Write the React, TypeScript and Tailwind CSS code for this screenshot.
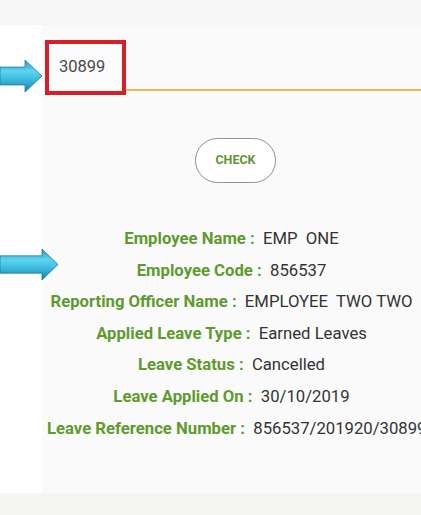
import React from "react";

function Arrow({ w, h, head }: { w: number; h: number; head: number }) {
  const sTop = h * 0.22;
  const sBot = h * 0.78;
  return (
    <svg width={w} height={h} viewBox={`0 0 ${w} ${h}`}>
      <defs>
        <linearGradient id={`g${w}`} x1="0" y1="0" x2="0" y2="1">
          <stop offset="0" stopColor="#2a9cc4" />
          <stop offset="0.35" stopColor="#5fd3f0" />
          <stop offset="0.6" stopColor="#3cbde0" />
          <stop offset="1" stopColor="#1b7ea6" />
        </linearGradient>
      </defs>
      <path
        d={`M0 ${sTop} L${w - head} ${sTop} L${w - head} 0 L${w} ${h / 2} L${w - head} ${h} L${w - head} ${sBot} L0 ${sBot} Z`}
        fill={`url(#g${w})`}
        stroke="#1f7d9f"
        strokeWidth="0.8"
      />
    </svg>
  );
}

const rows: [string, string][] = [
  ["Employee Name", "EMP  ONE"],
  ["Employee Code", "856537"],
  ["Reporting Officer Name", "EMPLOYEE  TWO TWO"],
  ["Applied Leave Type", "Earned Leaves"],
  ["Leave Status", "Cancelled"],
  ["Leave Applied On", "30/10/2019"],
  ["Leave Reference Number", "856537/201920/30899"],
];

export default function App() {
  return (
    <div
      className="relative w-[421px] h-[515px] overflow-hidden bg-[#f6f6f5] flex flex-col"
      style={{ fontFamily: "Roboto, 'Noto Sans', sans-serif" }}
    >
      <div className="h-[25px] bg-[#f6f6f6]" />
      <div className="flex h-[468px]">
        <div className="w-[42px] bg-white" />
        <div className="flex-1 bg-[#fafafa] flex flex-col overflow-hidden">
          <div className="flex items-end mt-[15px] pl-[3px]">
            <div className="w-[81px] h-[55px] border-[4px] border-[#d61f26] flex items-center pl-[10px] text-[16.5px] text-[#4a4a4a] bg-[#fbfbfb]">
              30899
            </div>
            <div className="flex-1 h-[2px] bg-[#f0b35e] mb-[4px]" />
          </div>
          <div className="flex justify-center pl-[8px] mt-[43px]">
            <div className="w-[81px] h-[45px] rounded-full border-[1.5px] border-[#8b9684] bg-white flex items-center justify-center text-[12.5px] font-bold text-[#659236]">
              CHECK
            </div>
          </div>
          <div className="mt-[40px] px-[5px] text-center">
            {rows.map(([l, v]) => (
              <div key={l} className="h-[31.6px] leading-[31.6px] whitespace-pre text-[16.7px]">
                <span className="font-bold text-[#5f9a2f]">{l} :</span>
                <span className="text-[#333333]">{"  " + v}</span>
              </div>
            ))}
          </div>
        </div>
      </div>
      <div className="flex-1 bg-[#f5f5f3]" />
      <div className="absolute left-0 top-[60px]">
        <Arrow w={42} h={32} head={17} />
      </div>
      <div className="absolute left-0 top-[249px]">
        <Arrow w={58} h={31} head={16} />
      </div>
    </div>
  );
}
